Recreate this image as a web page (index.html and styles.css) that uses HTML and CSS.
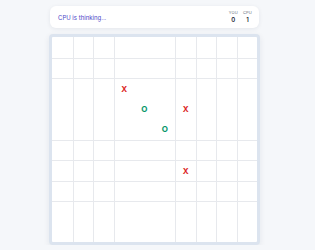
FILE: index.html
```html
<!DOCTYPE html>
<html lang="en">
<head>
  <meta charset="UTF-8" />
  <meta name="viewport" content="width=device-width, initial-scale=1.0"/>
  <title>Gomoku vs CPU</title>
  <link rel="stylesheet" href="styles.css">
</head>
<body>
<div class="wrap">
  <div class="status">
    <span class="msg">CPU is thinking...</span>
    <div class="scores">
      <div class="score"><span class="lbl">YOU</span><span class="val">0</span></div>
      <div class="score"><span class="lbl">CPU</span><span class="val">1</span></div>
    </div>
  </div>
  <div class="board" id="board"></div>
</div>

<script>
const moves = { '2-3': 'X', '3-4': 'O', '3-6': 'X', '4-5': 'O', '6-6': 'X' };
// lines that don't show on the board
const noCol = [4, 5];
const noRow = [3, 4, 9];

const board = document.getElementById('board');
let html = '';
for (let r = 0; r < 10; r++) {
  for (let c = 0; c < 10; c++) {
    let cls = 'cell';
    if (c > 0 && !noCol.includes(c)) cls += ' bl';
    if (r > 0 && !noRow.includes(r)) cls += ' bt';
    const m = moves[r + '-' + c];
    if (m) cls += m === 'X' ? ' x' : ' o';
    html += `<div class="${cls}">${m || ''}</div>`;
  }
}
board.innerHTML = html;
</script>
</body>
</html>
```

FILE: styles.css
```css
body {
  margin: 0;
  background: #f5f7fa;
  font-family: Inter, "Noto Sans", sans-serif;
}
.wrap {
  width: 211px;
  padding: 6px 0 0 49px;
}
.status {
  margin: 0 1px;
  height: 22px;
  background: white;
  border-radius: 6px;
  box-shadow: 0 1px 4px rgba(30,40,60,0.08);
  display: flex;
  align-items: center;
  justify-content: space-between;
  padding: 0 7px 0 8px;
  box-sizing: border-box;
}
.msg {
  font-size: 6px;
  color: #4c46c8;
}
.scores {
  display: flex;
  gap: 5px;
}
.score {
  display: flex;
  flex-direction: column;
  align-items: center;
  line-height: 1;
}
.lbl {
  font-size: 4px;
  color: #6b7280;
  letter-spacing: 0.2px;
}
.val {
  font-size: 6px;
  font-weight: 600;
  color: #1f2937;
  margin-top: 2px;
}
.board {
  margin-top: 6px;
  border: 3px solid #dce4ef;
  border-radius: 4px;
  background: white;
  box-shadow: 0 2px 6px rgba(30,40,60,0.08);
  display: grid;
  grid-template-columns: repeat(10, 20.5px);
  grid-template-rows: repeat(10, 20.5px);
}
.cell {
  box-sizing: border-box;
  display: flex;
  align-items: center;
  justify-content: center;
  font-size: 8px;
  font-weight: 700;
}
.bl {
  border-left: 1px solid #e7e9ed;
}
.bt {
  border-top: 1px solid #e7e9ed;
}
.x {
  color: #dc2626;
}
.o {
  color: #059669;
}
```
